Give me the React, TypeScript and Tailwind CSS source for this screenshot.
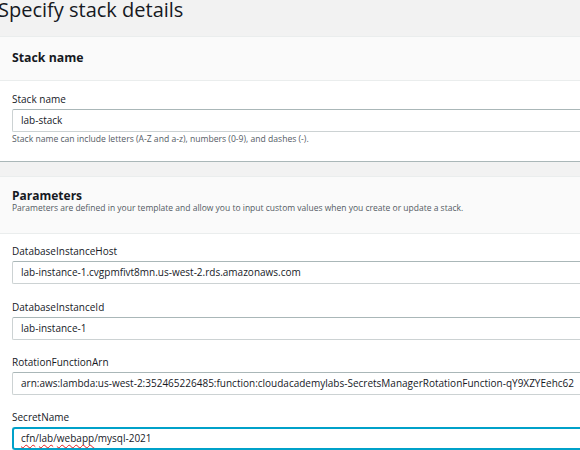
import React from "react";

const font = { fontFamily: '"Open Sans", "Noto Sans", sans-serif' };

function Label({ children }: { children: React.ReactNode }) {
  return <div className="text-[10px] leading-[14px] text-[#16191f] pl-[12px] whitespace-nowrap">{children}</div>;
}

function Input({ children }: { children: React.ReactNode }) {
  return (
    <div className="mt-[3px] ml-[12px] h-[23px] border border-[#ccd2d3] border-t-[#aab7b8] rounded-l-[2px] border-r-0 bg-white flex items-center pl-[8px] text-[10px] text-[#16191f] whitespace-nowrap overflow-hidden">
      {children}
    </div>
  );
}

function Field({ label, value, mt }: { label: string; value: React.ReactNode; mt: string }) {
  return (
    <div className={`flex flex-col ${mt}`}>
      <Label>{label}</Label>
      <Input>{value}</Input>
    </div>
  );
}

const squiggle = "underline decoration-wavy decoration-[#e02020] decoration-1 underline-offset-[2px]";

export default function App() {
  return (
    <div className="w-[580px] h-[450px] overflow-hidden bg-[#f2f2f2] flex flex-col" style={font}>
      <div className="h-[36px] shrink-0 flex items-start -ml-[2px] overflow-hidden">
        <div className="text-[20px] leading-[26px] text-[#16191f] -mt-[3px] whitespace-nowrap">Specify stack details</div>
      </div>
      <div className="bg-white border-b border-[#aab7b8] shrink-0">
        <div className="h-[45px] bg-[#fafafa] border-t border-b border-[#eaeded] flex items-center pl-[12px]">
          <div className="text-[12.3px] font-bold text-[#16191f]">Stack name</div>
        </div>
        <div className="h-[80px] pt-[11px]">
          <Label>Stack name</Label>
          <Input>lab-stack</Input>
          <div className="mt-[1px] pl-[12px] text-[8.6px] leading-[12px] text-[#545b64] whitespace-nowrap">
            Stack name can include letters (A-Z and a-z), numbers (0-9), and dashes (-).
          </div>
        </div>
      </div>
      <div className="h-[14px] shrink-0" />
      <div className="bg-white border-t border-[#eaeded] shrink-0">
        <div className="h-[57px] bg-[#fafafa] border-b border-[#eaeded] pt-[12px] pl-[12px]">
          <div className="text-[12px] leading-[14px] font-bold text-[#16191f]">Parameters</div>
          <div className="text-[8.5px] leading-[10px] text-[#545b64] whitespace-nowrap">
            Parameters are defined in your template and allow you to input custom values when you create or update a stack.
          </div>
        </div>
        <div className="pt-[10px] pb-[20px]">
          <Field mt="mt-0" label="DatabaseInstanceHost" value="lab-instance-1.cvgpmfivt8mn.us-west-2.rds.amazonaws.com" />
          <Field mt="mt-[16px]" label="DatabaseInstanceId" value="lab-instance-1" />
          <Field
            mt="mt-[15px]"
            label="RotationFunctionArn"
            value="arn:aws:lambda:us-west-2:352465226485:function:cloudacademylabs-SecretsManagerRotationFunction-qY9XZYEehc62"
          />
          <div className="flex flex-col mt-[15px]">
            <Label>SecretName</Label>
            <div className="mt-[3px] ml-[12px] h-[23px] border-2 border-[#00a1c9] rounded-l-[3px] border-r-0 bg-white flex items-center pl-[7px] text-[10px] text-[#16191f] whitespace-nowrap">
              <span className={squiggle}>cfn</span>/<span className={squiggle}>lab</span>/<span className={squiggle}>webapp</span>/mysql-2021
            </div>
          </div>
        </div>
      </div>
    </div>
  );
}
